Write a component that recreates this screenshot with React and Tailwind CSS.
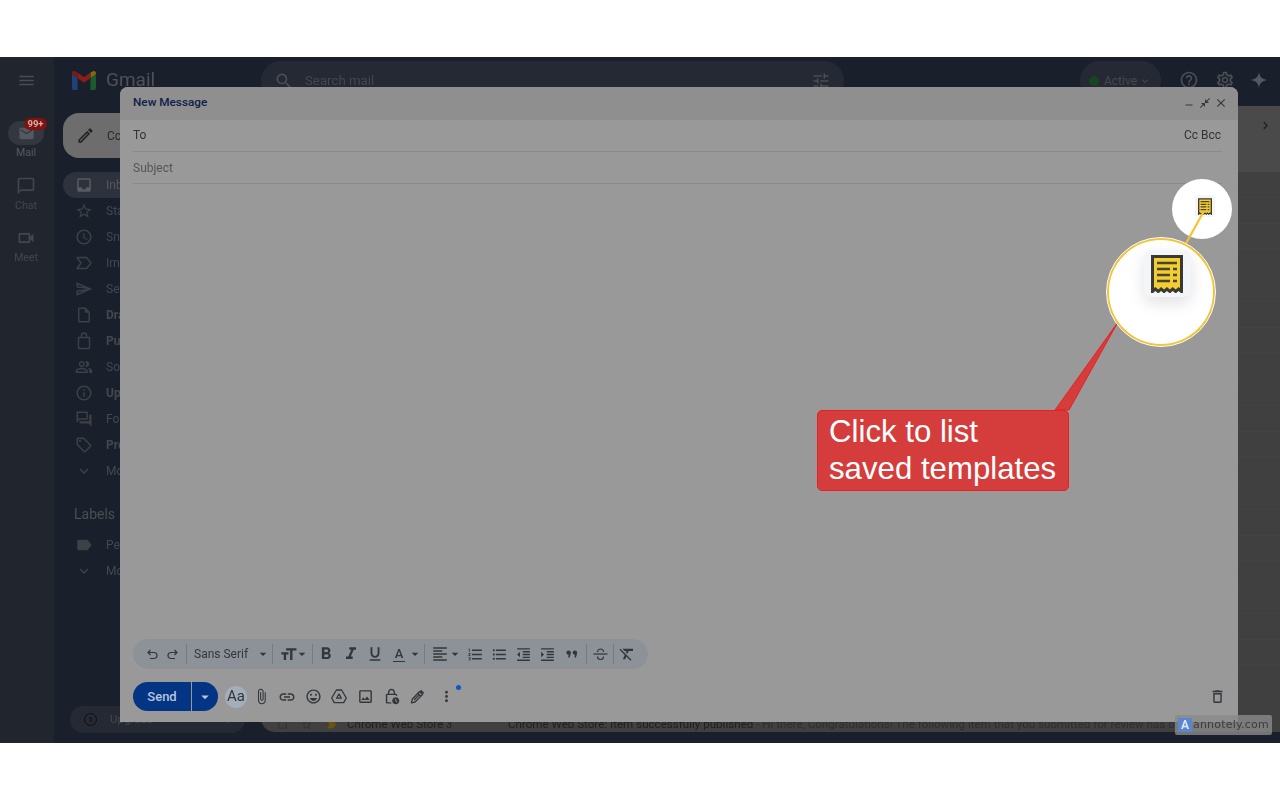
import {
  MdMenu, MdMail, MdOutlineChatBubbleOutline, MdOutlineVideocam, MdSearch, MdTune, MdHelpOutline, MdOutlineSettings,
  MdOutlineEdit, MdInbox, MdOutlineStarBorder, MdAccessTime, MdOutlineSend, MdOutlineInsertDriveFile,
  MdOutlinePeopleAlt, MdInfoOutline, MdOutlineForum, MdOutlineLocalOffer, MdExpandMore, MdLabel,
  MdChevronRight, MdKeyboardArrowDown, MdArrowDropDown, MdFormatSize, MdFormatBold, MdFormatItalic,
  MdFormatUnderlined, MdFormatAlignLeft, MdFormatListNumbered, MdFormatListBulleted, MdFormatIndentDecrease,
  MdFormatIndentIncrease, MdFormatClear, MdAttachFile, MdLink, MdOutlineEmojiEmotions,
  MdOutlineInsertPhoto, MdOutlineLockClock, MdMoreVert, MdOutlineDelete, MdRemove, MdCloseFullscreen,
  MdClose, MdStarBorder, MdCropSquare, MdLabelImportant,
} from 'react-icons/md';

function ImportantIcon({ size, className }) {
  return (
    <svg width={size} height={size} viewBox="0 0 18 18" fill="none" stroke="currentColor" strokeWidth="1.4" strokeLinejoin="round" className={className}>
      <path d="M2 3.5h9.5L16 9l-4.5 5.5H2L6 9z" />
    </svg>
  );
}

function BagIcon({ size, className }) {
  return (
    <svg width={size} height={size} viewBox="0 0 18 18" fill="none" stroke="currentColor" strokeWidth="1.4" strokeLinejoin="round" className={className}>
      <path d="M3.5 5.5h11v10a1 1 0 0 1-1 1h-9a1 1 0 0 1-1-1z" />
      <path d="M6.5 5.5V3.5a2.5 2.5 0 0 1 5 0v2" />
    </svg>
  );
}

const navItems = [
  { icon: MdInbox, label: 'Inbox', active: true },
  { icon: MdOutlineStarBorder, label: 'Starred' },
  { icon: MdAccessTime, label: 'Snoozed' },
  { icon: ImportantIcon, label: 'Important' },
  { icon: MdOutlineSend, label: 'Sent' },
  { icon: MdOutlineInsertDriveFile, label: 'Drafts', bold: true },
  { icon: BagIcon, label: 'Purchases', bold: true },
  { icon: MdOutlinePeopleAlt, label: 'Social' },
  { icon: MdInfoOutline, label: 'Updates', bold: true },
  { icon: MdOutlineForum, label: 'Forums' },
  { icon: MdOutlineLocalOffer, label: 'Promotions', bold: true },
  { icon: MdExpandMore, label: 'More' },
];

const dotRows = [0, 1, 3, 5, 6, 8, 10, 11, 13, 15];

function RailItem({ icon: Icon, label }) {
  return (
    <div className="flex flex-col items-center h-[52px] pt-[2px]">
      <Icon size={20} className="text-[#43464c]" />
      <span className="text-[10.5px] leading-[14px] mt-[3px] text-[#43464c]">{label}</span>
    </div>
  );
}

function NavRow({ icon: Icon, label, active, bold }) {
  return (
    <div className={`flex items-center h-[26px] pl-[12px] rounded-full ${active ? 'bg-[#2e323c]' : ''}`}>
      <Icon size={18} className={`shrink-0 ${active ? 'text-[#585b60]' : 'text-[#3d4046]'}`} />
      <span className={`ml-[13px] text-[12px] ${active ? 'text-[#55585d]' : 'text-[#44474d]'} ${bold ? 'font-bold' : ''}`}>{label}</span>
    </div>
  );
}

function GmailLogo() {
  return (
    <svg width="24" height="19" viewBox="0 0 24 19">
      <path d="M0 3v14a2 2 0 0 0 2 2h3.5V7z" fill="#20427a" />
      <path d="M18.5 7v12H22a2 2 0 0 0 2-2V3z" fill="#1c5a30" />
      <path d="M18.5 1.5V7L24 3V2.2C24 .4 22-.5 20.6.4z" fill="#85690f" />
      <path d="M5.5 7V1.5L12 6.3l6.5-4.8V7L12 11.8z" fill="#8a1f1a" />
      <path d="M0 2.2V3l5.5 4V1.5L3.4.4C2-.5 0 .4 0 2.2z" fill="#7c1c18" />
    </svg>
  );
}

function Cell({ w, className = '', children }) {
  return <div className={`flex justify-center items-center shrink-0 ${w} ${className}`}>{children}</div>;
}

function Divider({ className = '' }) {
  return <div className={`w-px h-[20px] bg-[#767b82] shrink-0 ${className}`} />;
}

function UndoIcon({ flip }) {
  return (
    <svg width="13" height="13" viewBox="0 0 13 13" fill="none" stroke="#33363a" strokeWidth="1.2" className={flip ? '-scale-x-100' : ''}>
      <path d="M4.5 2 2 4.5 4.5 7" />
      <path d="M2 4.5h6a2.8 2.8 0 0 1 0 6H4" />
    </svg>
  );
}

function QuoteIcon() {
  return (
    <svg width="12" height="8" viewBox="0 0 12 8" fill="#33363a">
      <circle cx="2.6" cy="2.6" r="2.2" />
      <circle cx="8.9" cy="2.6" r="2.2" />
      <path d="M2.8 3.5h2L3.6 7.5H2.2zM9.1 3.5h2L9.9 7.5H8.5z" />
    </svg>
  );
}

function StrikeIcon() {
  return (
    <svg width="15" height="14" viewBox="0 0 15 14" fill="none" stroke="#33363a" strokeWidth="1.2">
      <path d="M.5 7h14" />
      <path d="M4.5 5a3 3 0 0 1 6 0" />
      <path d="M4.5 9.5a3 3 0 0 0 6 0" />
    </svg>
  );
}

function PenIcon() {
  return (
    <svg width="16" height="16" viewBox="0 0 16 16" fill="none" stroke="#33363a" strokeWidth="1.3" strokeLinejoin="round">
      <path d="M10.5 2.5 13.5 5.5 6 13l-3.5.8L3.2 10.2z" />
      <path d="M8.8 4.2 11.8 7.2M5 11l5.5-5.5" />
      <path d="M11.5 1.5 14.5 4.5" strokeWidth="1.8" />
    </svg>
  );
}

function Formatting() {
  const ic = 'shrink-0 text-[#33363a]';
  return (
    <div className="flex items-center h-[30px] w-[515px] pl-[9px] rounded-full bg-[#8d9298]">
      <Cell w="w-[20px]"><UndoIcon /></Cell>
      <Cell w="w-[20px]"><UndoIcon flip /></Cell>
      <Divider className="ml-[4px]" />
      <span className="ml-[7px] w-[53px] shrink-0 whitespace-nowrap text-[12px] text-[#33363a]">Sans Serif</span>
      <Cell w="w-[16px]" className="ml-[8px]"><MdArrowDropDown size={16} className={ic} /></Cell>
      <Divider className="ml-px" />
      <Cell w="w-[22px]" className="ml-[4px]"><MdFormatSize size={19} className={ic} /></Cell>
      <Cell w="w-[6px]"><MdArrowDropDown size={16} className={ic} /></Cell>
      <Divider className="ml-[7px]" />
      <Cell w="w-[26px]"><MdFormatBold size={20} className={ic} /></Cell>
      <Cell w="w-[24px]"><MdFormatItalic size={20} className={ic} /></Cell>
      <Cell w="w-[24px]"><MdFormatUnderlined size={18} className={ic} /></Cell>
      <Cell w="w-[24px]">
        <span className="w-[12px] border-b border-[#33363a] text-center text-[13px] leading-[14px] font-medium text-[#33363a]">A</span>
      </Cell>
      <Cell w="w-[8px]"><MdArrowDropDown size={16} className={ic} /></Cell>
      <Divider className="ml-[5px]" />
      <Cell w="w-[24px]" className="ml-[3px]"><MdFormatAlignLeft size={18} className={ic} /></Cell>
      <Cell w="w-[6px]"><MdArrowDropDown size={16} className={ic} /></Cell>
      <Cell w="w-[34px]"><MdFormatListNumbered size={17} className={ic} /></Cell>
      <Cell w="w-[14px]"><MdFormatListBulleted size={17} className={ic} /></Cell>
      <Cell w="w-[34px]"><MdFormatIndentDecrease size={17} className={ic} /></Cell>
      <Cell w="w-[14px]"><MdFormatIndentIncrease size={17} className={ic} /></Cell>
      <Cell w="w-[18px]" className="ml-[9px]"><QuoteIcon /></Cell>
      <Divider className="ml-[5px]" />
      <Cell w="w-[26px]"><StrikeIcon /></Cell>
      <Divider />
      <Cell w="w-[26px]"><MdFormatClear size={18} className={ic} /></Cell>
    </div>
  );
}

function DriveIcon() {
  return (
    <svg width="16" height="15" viewBox="0 0 16 15" fill="none" stroke="#33363a" strokeWidth="1.3" strokeLinejoin="round">
      <path d="M5.4 1h5.2l4.7 8-2.6 4.6H3.3L.7 9z" />
      <path d="M8 5 5.6 9.2h4.8z" />
    </svg>
  );
}

function SendBar() {
  const ic = 'text-[#33363a]';
  return (
    <div className="flex items-center h-[29px] mt-[13px]">
      <div className="flex items-center justify-center w-[58px] h-[29px] rounded-l-full bg-[#033584] text-[13px] font-medium text-[#b7c6dc]">Send</div>
      <div className="flex items-center justify-center w-[26px] h-[29px] ml-px rounded-r-full bg-[#033584]">
        <MdArrowDropDown size={18} className="text-[#b7c6dc]" />
      </div>
      <div className="flex items-center justify-center w-[22px] h-[22px] ml-[7px] rounded-full bg-[#a3aebd] text-[15px] text-[#333]">Aa</div>
      <Cell w="w-[26px]" className="ml-px"><MdAttachFile size={17} className={ic} /></Cell>
      <Cell w="w-[26px]"><MdLink size={18} className={ic} /></Cell>
      <Cell w="w-[26px]"><MdOutlineEmojiEmotions size={17} className={ic} /></Cell>
      <Cell w="w-[26px]"><DriveIcon /></Cell>
      <Cell w="w-[26px]"><MdOutlineInsertPhoto size={17} className={ic} /></Cell>
      <Cell w="w-[26px]"><MdOutlineLockClock size={17} className={ic} /></Cell>
      <Cell w="w-[26px]"><PenIcon /></Cell>
      <Cell w="w-[26px]" className="ml-[3px] relative">
        <MdMoreVert size={17} className={ic} />
        <span className="absolute right-[-2px] top-[-3px] w-[5px] h-[5px] rounded-full bg-[#0b57c8]" />
      </Cell>
      <Cell w="w-[26px]" className="ml-auto -mr-[8px]"><MdOutlineDelete size={17} className={ic} /></Cell>
    </div>
  );
}

function TemplateIcon({ big }) {
  return (
    <svg viewBox="0 0 32 38" className={big ? 'w-[32px] h-[38px]' : 'w-[14px] h-[17px]'}>
      <path d="M1.5 1.5h29v35l-3-2.5-2.8 2.5-3-2.5-2.8 2.5-3-2.5-2.8 2.5-3-2.5-2.8 2.5-3-2.5-2.8 2.5z" fill="#f2cd33" stroke="#3a3a33" strokeWidth="3" />
      <path d="M6 8h20M6 14h13M22 14h4M6 20h13M22 20h4M6 26h13M22 26h4" stroke="#4a4428" strokeWidth="2.6" />
    </svg>
  );
}

export default function App() {
  return (
    <div className="flex flex-col h-[800px] w-[1280px] bg-white overflow-hidden font-['Roboto',sans-serif]">
      <div className="h-[57px] shrink-0" />
      <div className="relative h-[686px] shrink-0 bg-[#1a202b] overflow-hidden">
        <div className="flex h-full blur-[0.4px]">
          {/* left rail */}
          <div className="flex flex-col w-[54px] pr-[2px] shrink-0 bg-[#21252e]">
            <div className="flex justify-center pt-[14px] h-[64px]"><MdMenu size={19} className="text-[#4a4d53]" /></div>
            <div className="flex flex-col items-center h-[53px]">
              <div className="relative flex items-center justify-center w-[36px] h-[24px] rounded-full bg-[#33373f]">
                <MdMail size={17} className="text-[#55585e]" />
                <span className="absolute left-[16px] top-[-3px] flex items-center justify-center w-[23px] h-[12px] rounded-full bg-[#7d1410] text-[9.5px] font-bold text-[#d8b0ac]">99+</span>
              </div>
              <span className="text-[10.5px] leading-[14px] mt-[1px] text-[#55585e]">Mail</span>
            </div>
            <RailItem icon={MdOutlineChatBubbleOutline} label="Chat" />
            <RailItem icon={MdOutlineVideocam} label="Meet" />
          </div>

          <div className="flex flex-col flex-1 min-w-0">
            {/* top bar */}
            <div className="flex items-start h-[49px] shrink-0">
              <div className="flex items-center w-[207px] h-[47px] pl-[18px] shrink-0">
                <GmailLogo />
                <span className="ml-[10px] text-[19px] text-[#4e5157]">Gmail</span>
              </div>
              <div className="flex items-center w-[583px] h-[39px] mt-[4px] pl-[13px] pr-[13px] rounded-full bg-[#252933] shrink-0">
                <MdSearch size={20} className="text-[#4a4d53]" />
                <span className="ml-[11px] text-[13.25px] text-[#45484e]">Search mail</span>
                <MdTune size={20} className="ml-auto text-[#4a4d53]" />
              </div>
              <div className="flex items-center w-[81px] h-[39px] ml-[236px] mt-[4px] pl-[9px] rounded-full bg-[#252933] shrink-0">
                <span className="w-[10px] h-[10px] rounded-full bg-[#0f4a1c] border border-[#2b3a30]" />
                <span className="ml-[5px] text-[12px] text-[#45484e]">Active</span>
                <MdKeyboardArrowDown size={12} className="ml-[2px] text-[#45484e]" />
              </div>
              <MdHelpOutline size={20} className="ml-[18px] mt-[13px] text-[#4b4e54] shrink-0" />
              <MdOutlineSettings size={20} className="ml-[16px] mt-[13px] text-[#4b4e54] shrink-0" />
              <svg width="16" height="16" viewBox="0 0 16 16" className="ml-[16px] mt-[15px] shrink-0">
                <path d="M8 0c.6 4.6 2.9 7.2 8 8-5.1.8-7.4 3.4-8 8-.6-4.6-2.9-7.2-8-8 5.1-.8 7.4-3.4 8-8z" fill="#55585e" />
              </svg>
            </div>

            <div className="flex flex-1 min-h-0">
              {/* sidebar */}
              <div className="flex flex-col w-[207px] shrink-0 pl-[9px] pr-[10px]">
                <div className="flex items-center h-[45px] mt-[7px] w-[150px] pl-[13px] rounded-[16px] bg-[#6d6d6d] shrink-0">
                  <MdOutlineEdit size={19} className="text-[#232323]" />
                  <span className="ml-[12px] text-[12px] text-[#2a2a2a]">Compose</span>
                </div>
                <div className="flex flex-col mt-[14px]">
                  {navItems.map((n) => <NavRow key={n.label} {...n} />)}
                </div>
                <div className="mt-[21px] pl-[11px] h-[18px] text-[14px] leading-[18px] text-[#4a4d53]">Labels</div>
                <div className="flex flex-col mt-[9px]">
                  <NavRow icon={MdLabel} label="Personal" />
                  <NavRow icon={MdExpandMore} label="More" />
                </div>
                <div className="flex items-center h-[27px] w-[175px] mt-auto mb-[10px] ml-[7px] pl-[14px] rounded-full bg-[#252933]">
                  <span className="flex items-center justify-center w-[13px] h-[13px] rounded-full border-[1.5px] border-[#0e0e0e] text-[8px] font-bold text-[#0e0e0e]">1</span>
                  <span className="ml-[13px] text-[11.5px] text-[#44474d]">Upgrade</span>
                  <MdChevronRight size={12} className="ml-auto mr-[10px] text-[#44474d]" />
                </div>
              </div>

              {/* message list */}
              <div className="flex flex-col flex-1 min-w-0 h-[626px] rounded-l-[14px] bg-[#404040] overflow-hidden">
                <div className="flex justify-end h-[66px] pr-[7px] pt-[12px] bg-[#4a4a4a] shrink-0">
                  <MdChevronRight size={15} className="text-[#1e1e1e]" />
                </div>
                {Array.from({ length: 20 }, (_, i) => (
                  <div key={i} className="flex items-center justify-end h-[26px] pr-[38px] border-b border-[#434343] shrink-0">
                    {dotRows.includes(i) && <span className="text-[8px] tracking-[1px] text-[#222]">··</span>}
                  </div>
                ))}
                <div className="h-[19px] shrink-0" />
                <div className="flex items-center h-[21px] pt-[6px] pl-[15px] shrink-0 whitespace-nowrap text-[11.6px] text-[#1f1f1f]">
                  <MdCropSquare size={13} className="text-[#333]" />
                  <MdStarBorder size={13} className="ml-[11px] text-[#333]" />
                  <MdLabelImportant size={13} className="ml-[12px] text-[#6b5412]" />
                  <span className="ml-[9px] w-[161px] shrink-0">Chrome Web Store <span className="text-[10px]">3</span></span>
                  <span>Chrome Web Store: Item successfully published <span className="text-[#2e2e2e]">- Hi there, Congratulations! The following item that you submitted for review has be</span></span>
                </div>
              </div>
            </div>
          </div>
        </div>

        {/* compose window */}
        <div className="absolute left-[120px] top-[30px] flex flex-col w-[1118px] h-[635px] rounded-t-[8px] bg-[#999999] text-[#33363a] blur-[0.3px]">
          <div className="flex items-center h-[33px] pl-[13px] pr-[10px] pb-[2px] rounded-t-[8px] bg-[#8f8f8f] shrink-0">
            <span className="text-[11.75px] font-medium text-[#0e2148]">New Message</span>
            <MdRemove size={12} className="ml-auto mt-[4px]" />
            <MdCloseFullscreen size={12} className="ml-[4px]" />
            <MdClose size={14} className="ml-[3px]" />
          </div>
          <div className="flex flex-col flex-1 px-[13px] pr-[16px] min-h-0">
            <div className="flex items-center justify-between h-[32px] pr-px pb-px border-b border-[#8a8a8a] text-[12px] text-[#333] shrink-0">
              <span>To</span>
              <span>Cc Bcc</span>
            </div>
            <div className="flex items-center h-[32px] border-b border-[#8a8a8a] text-[12px] text-[#555] shrink-0">Subject</div>
            <div className="flex-1" />
            <Formatting />
            <SendBar />
            <div className="h-[11px] shrink-0" />
          </div>
        </div>

        {/* annotations */}
        <div className="absolute left-[1172px] top-[122px] flex items-center justify-center w-[60px] h-[60px] rounded-full bg-white">
          <div className="flex items-center justify-center w-[20px] h-[22px] mt-[-6px] ml-[5px] rounded-[3px] bg-[#f4f5f8]"><TemplateIcon /></div>
        </div>
        <svg className="absolute left-0 top-0 w-[1280px] h-[686px] pointer-events-none" viewBox="0 0 1280 686">
          <path d="M1118 265 1055 353h14z" fill="#d53c3c" stroke="#e8201f" strokeWidth="1" />
          <path d="M1204 154 1184 190" stroke="#f5c431" strokeWidth="2.2" />
        </svg>
        <div className="absolute left-[1107px] top-[181px] flex items-center justify-center w-[108px] h-[108px] rounded-full bg-white border-[2px] border-[#f5c431] outline outline-white">
          <div className="flex items-center justify-center w-[47px] h-[47px] mt-[-37px] ml-[12px] rounded-[8px] bg-[#f4f5f8] shadow-[0_6px_16px_rgba(0,0,0,0.12)]"><TemplateIcon big /></div>
        </div>
        <div className="absolute left-[817px] top-[353px] w-[252px] h-[81px] pl-[11px] pt-[3px] rounded-[5px] bg-[#d53c3c] border border-[#e8201f] text-[31.2px] leading-[36.5px] text-white font-['Liberation_Sans',sans-serif]">
          <div>Click to list</div>
          <div>saved templates</div>
        </div>

        {/* watermark */}
        <div className="absolute left-[1175px] top-[658px] flex items-center w-[97px] h-[20px] pl-[3px] rounded-[2px] bg-[#8a8a8a]/80">
          <span className="flex items-center justify-center w-[14px] h-[14px] bg-[#5b85cc] text-[12px] font-bold text-[#dde6f5]">A</span>
          <span className="ml-[1px] text-[11px] tracking-[0.2px] text-[#3c3c3c] font-['DejaVu_Sans',sans-serif]">annotely.com</span>
        </div>
      </div>
      <div className="flex-1" />
    </div>
  );
}
